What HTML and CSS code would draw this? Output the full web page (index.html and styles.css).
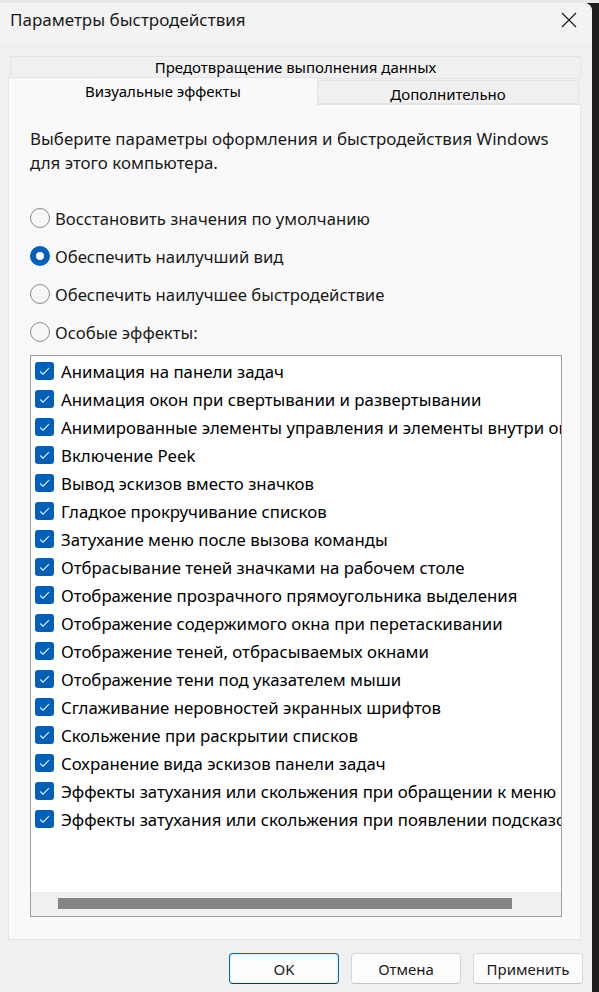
FILE: index.html
```html
<!DOCTYPE html>
<html lang="ru">
<head>
<meta charset="utf-8">
<title>Параметры быстродействия</title>
<link rel="stylesheet" href="styles.css">
</head>
<body>
<div class="top-strip"></div>
<div class="window">
  <div class="titlebar">
    <span class="title">Параметры быстродействия</span>
    <svg class="close" width="16" height="16" viewBox="0 0 16 16"><path d="M1 1 L15 15 M15 1 L1 15" stroke="#1a1a1a" stroke-width="1.2" fill="none"/></svg>
  </div>
  <div class="tabs">
    <div class="tab-row1">
      <div class="tab tab-top">Предотвращение выполнения данных</div>
    </div>
    <div class="tab-row2">
      <div class="tab tab-active">Визуальные эффекты</div>
      <div class="tab tab-other">Дополнительно</div>
    </div>
    <div class="panel">
      <p class="desc">Выберите параметры оформления и быстродействия Windows для этого компьютера.</p>
      <div class="radios">
        <div class="radio-row"><span class="radio"></span><span>Восстановить значения по умолчанию</span></div>
        <div class="radio-row"><span class="radio checked"></span><span>Обеспечить наилучший вид</span></div>
        <div class="radio-row"><span class="radio"></span><span>Обеспечить наилучшее быстродействие</span></div>
        <div class="radio-row"><span class="radio"></span><span>Особые эффекты:</span></div>
      </div>
      <div class="listbox">
        <div class="items">
          <div class="item"><span class="cb"><svg width="19" height="18" viewBox="0 0 19 18"><path d="M5 9.3 L8 12.2 L14 6.2" stroke="#eaf2fb" stroke-width="1.1" fill="none"/></svg></span>Анимация на панели задач</div>
          <div class="item"><span class="cb"><svg width="19" height="18" viewBox="0 0 19 18"><path d="M5 9.3 L8 12.2 L14 6.2" stroke="#eaf2fb" stroke-width="1.1" fill="none"/></svg></span>Анимация окон при свертывании и развертывании</div>
          <div class="item"><span class="cb"><svg width="19" height="18" viewBox="0 0 19 18"><path d="M5 9.3 L8 12.2 L14 6.2" stroke="#eaf2fb" stroke-width="1.1" fill="none"/></svg></span>Анимированные элементы управления и элементы внутри окна</div>
          <div class="item"><span class="cb"><svg width="19" height="18" viewBox="0 0 19 18"><path d="M5 9.3 L8 12.2 L14 6.2" stroke="#eaf2fb" stroke-width="1.1" fill="none"/></svg></span>Включение Peek</div>
          <div class="item"><span class="cb"><svg width="19" height="18" viewBox="0 0 19 18"><path d="M5 9.3 L8 12.2 L14 6.2" stroke="#eaf2fb" stroke-width="1.1" fill="none"/></svg></span>Вывод эскизов вместо значков</div>
          <div class="item"><span class="cb"><svg width="19" height="18" viewBox="0 0 19 18"><path d="M5 9.3 L8 12.2 L14 6.2" stroke="#eaf2fb" stroke-width="1.1" fill="none"/></svg></span>Гладкое прокручивание списков</div>
          <div class="item"><span class="cb"><svg width="19" height="18" viewBox="0 0 19 18"><path d="M5 9.3 L8 12.2 L14 6.2" stroke="#eaf2fb" stroke-width="1.1" fill="none"/></svg></span>Затухание меню после вызова команды</div>
          <div class="item"><span class="cb"><svg width="19" height="18" viewBox="0 0 19 18"><path d="M5 9.3 L8 12.2 L14 6.2" stroke="#eaf2fb" stroke-width="1.1" fill="none"/></svg></span>Отбрасывание теней значками на рабочем столе</div>
          <div class="item"><span class="cb"><svg width="19" height="18" viewBox="0 0 19 18"><path d="M5 9.3 L8 12.2 L14 6.2" stroke="#eaf2fb" stroke-width="1.1" fill="none"/></svg></span>Отображение прозрачного прямоугольника выделения</div>
          <div class="item"><span class="cb"><svg width="19" height="18" viewBox="0 0 19 18"><path d="M5 9.3 L8 12.2 L14 6.2" stroke="#eaf2fb" stroke-width="1.1" fill="none"/></svg></span>Отображение содержимого окна при перетаскивании</div>
          <div class="item"><span class="cb"><svg width="19" height="18" viewBox="0 0 19 18"><path d="M5 9.3 L8 12.2 L14 6.2" stroke="#eaf2fb" stroke-width="1.1" fill="none"/></svg></span>Отображение теней, отбрасываемых окнами</div>
          <div class="item"><span class="cb"><svg width="19" height="18" viewBox="0 0 19 18"><path d="M5 9.3 L8 12.2 L14 6.2" stroke="#eaf2fb" stroke-width="1.1" fill="none"/></svg></span>Отображение тени под указателем мыши</div>
          <div class="item"><span class="cb"><svg width="19" height="18" viewBox="0 0 19 18"><path d="M5 9.3 L8 12.2 L14 6.2" stroke="#eaf2fb" stroke-width="1.1" fill="none"/></svg></span>Сглаживание неровностей экранных шрифтов</div>
          <div class="item"><span class="cb"><svg width="19" height="18" viewBox="0 0 19 18"><path d="M5 9.3 L8 12.2 L14 6.2" stroke="#eaf2fb" stroke-width="1.1" fill="none"/></svg></span>Скольжение при раскрытии списков</div>
          <div class="item"><span class="cb"><svg width="19" height="18" viewBox="0 0 19 18"><path d="M5 9.3 L8 12.2 L14 6.2" stroke="#eaf2fb" stroke-width="1.1" fill="none"/></svg></span>Сохранение вида эскизов панели задач</div>
          <div class="item"><span class="cb"><svg width="19" height="18" viewBox="0 0 19 18"><path d="M5 9.3 L8 12.2 L14 6.2" stroke="#eaf2fb" stroke-width="1.1" fill="none"/></svg></span>Эффекты затухания или скольжения при обращении к меню</div>
          <div class="item"><span class="cb"><svg width="19" height="18" viewBox="0 0 19 18"><path d="M5 9.3 L8 12.2 L14 6.2" stroke="#eaf2fb" stroke-width="1.1" fill="none"/></svg></span>Эффекты затухания или скольжения при появлении подсказок</div>
        </div>
        <div class="hscroll"><div class="thumb"></div></div>
      </div>
    </div>
  </div>
  <div class="buttons">
    <button class="btn btn-default">OK</button>
    <button class="btn">Отмена</button>
    <button class="btn">Применить</button>
  </div>
</div>
</body>
</html>
```

FILE: styles.css
```css
* { box-sizing: border-box; }
html, body { margin: 0; padding: 0; }
body {
  background: #1f1f1f;
  width: 599px;
  height: 992px;
  overflow: hidden;
  font-family: "Noto Sans", "Open Sans", sans-serif;
  color: #1a1a1a;
}
.top-strip {
  height: 3px;
  background: #e8e8e8;
  width: 599px;
}
.window {
  width: 592px;
  height: 989px;
  background: #f0f0f0;
  border-top-right-radius: 8px;
  display: flex;
  flex-direction: column;
}
.titlebar {
  height: 53px;
  display: flex;
  align-items: flex-start;
  justify-content: space-between;
  padding: 5px 15px 0 10px;
  background: linear-gradient(#f3f3f3 0, #f3f3f3 40px, #f0f0f0 40px);
  border-top-right-radius: 8px;
}
.title {
  font-size: 17px;
  line-height: 24px;
}
.close { margin-top: 4px; }
.tabs {
  margin: 0 11px 0 8px;
  display: flex;
  flex-direction: column;
}
.tab {
  font-size: 15px;
  text-align: center;
  color: #000;
}
.tab-row1 { padding-left: 2px; }
.tab-top {
  height: 23px;
  line-height: 21px;
  border: 1px solid #e4e4e4;
  background: #f0f0f0;
}
.tab-row2 {
  display: flex;
  align-items: flex-end;
  margin-top: -2px;
  position: relative;
  z-index: 1;
  margin-bottom: -1px;
}
.tab-active {
  width: 310px;
  height: 28px;
  line-height: 26px;
  background: #f9f9f9;
  border: 1px solid #e4e4e4;
  border-bottom: none;
}
.tab-other {
  width: 261px;
  height: 24px;
  line-height: 24px;
  margin-bottom: 1px;
  background: #f0f0f0;
  border: 1px solid #e4e4e4;
  border-left: none;
  padding-top: 1px;
}
.panel {
  height: 836px;
  background: #f9f9f9;
  border: 1px solid #e4e4e4;
  padding: 22px 18px 0 21px;
}
.desc {
  margin: 0;
  font-size: 16.9px;
  line-height: 24px;
  width: 532px;
}
.radios {
  margin-top: 24px;
  display: flex;
  flex-direction: column;
}
.radio-row {
  height: 38px;
  display: flex;
  align-items: center;
  gap: 5px;
  font-size: 16.7px;
}
.radio {
  width: 20px;
  height: 20px;
  border-radius: 50%;
  border: 1px solid #8b8b8b;
  background: #f6f6f6;
  flex: none;
}
.radio.checked {
  border: 6px solid #005fb8;
  background: #ffffff;
}
.listbox {
  margin-top: 4px;
  width: 532px;
  height: 562px;
  border: 1px solid #a0a0a0;
  background: #fff;
  display: flex;
  flex-direction: column;
}
.items {
  flex: 1;
  overflow: hidden;
  padding-top: 1px;
}
.item {
  height: 28px;
  display: flex;
  align-items: center;
  gap: 7px;
  padding-left: 4px;
  font-size: 16.8px;
  white-space: nowrap;
  color: #000;
}
.cb {
  width: 19px;
  height: 18px;
  border-radius: 3px;
  background: #005fb8;
  flex: none;
  display: flex;
}
.hscroll {
  height: 24px;
  background: #f0f0f0;
  padding: 6px 0 0 27px;
}
.thumb {
  width: 454px;
  height: 11px;
  background: #858585;
}
.buttons {
  display: flex;
  justify-content: flex-end;
  gap: 12px;
  padding: 13px 9px 0 0;
}
.btn {
  width: 110px;
  height: 31px;
  border-radius: 4px;
  border: 1px solid #d6d6d6;
  border-bottom-color: #c4c4c4;
  background: #fdfdfd;
  font-family: "Noto Sans", "Open Sans", sans-serif;
  font-size: 15px;
  color: #1a1a1a;
  padding: 0;
}
.btn-default {
  border: 1px solid #0067c0;
  border-bottom-color: #003e73;
  box-shadow: inset 0 0 0 1px #e6f0fa;
}
```
